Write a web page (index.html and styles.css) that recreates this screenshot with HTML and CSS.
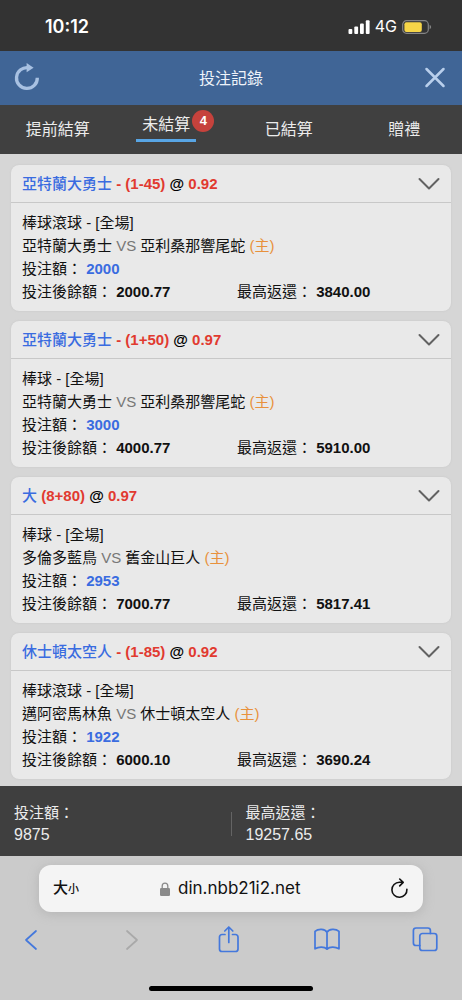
FILE: index.html
```html
<!DOCTYPE html>
<html lang="zh-Hant">
<head>
<meta charset="utf-8">
<meta name="viewport" content="width=device-width, initial-scale=1">
<title>投注記錄</title>
<link rel="stylesheet" href="styles.css">
</head>
<body>
<div class="status-bar">
  <time class="clock">10:12</time>
  <div class="status-icons">
    <svg class="signal" viewBox="0 0 22 14" width="22" height="14" aria-hidden="true"><rect x="0.5" y="9" width="3.8" height="5" rx="1"/><rect x="6.3" y="6.5" width="3.8" height="7.5" rx="1"/><rect x="12" y="3.5" width="3.8" height="10.5" rx="1"/><rect x="17.8" y="0.3" width="3.8" height="13.7" rx="1"/></svg>
    <span class="network">4G</span>
    <svg class="battery" viewBox="0 0 30 14" width="30" height="14" aria-hidden="true"><rect x="0.7" y="0.7" width="25.6" height="12.6" rx="3.8" fill="none" stroke="#858585" stroke-width="1.2"/><rect x="2.4" y="2.3" width="17.4" height="9.6" rx="2" fill="#f6d548"/><path d="M27.6 5c2 .6 2 3.600 0 4.200z" fill="#858585"/></svg>
  </div>
</div>
<header class="title-bar">
  <button class="icon-button" type="button" aria-label="重新整理"><svg viewBox="0 0 28 28" width="28" height="28"><path d="M24.300 13.700A10.400 10.400 0 1 1 15.600 3.800" fill="none" stroke="#a8c1e2" stroke-width="3.300"/><path d="M13.600 -1L20.600 3.700L13.600 8.300z" fill="#a8c1e2"/></svg></button>
  <h1 class="title">投注記錄</h1>
  <button class="icon-button" type="button" aria-label="關閉"><svg viewBox="0 0 28 28" width="28" height="28"><path d="M5.500 5L22.500 22M22.500 5L5.500 22" fill="none" stroke="#b9cfec" stroke-width="2.500" stroke-linecap="round"/></svg></button>
</header>
<nav class="tabs">
  <button class="tab" type="button">提前結算</button>
  <button class="tab tab-current" type="button" aria-current="page"><span class="tab-active">未結算</span><span class="badge">4</span></button>
  <button class="tab" type="button">已結算</button>
  <button class="tab" type="button">贈禮</button>
</nav>
<main class="bets">
  <article class="card">
    <header class="card-head">
      <h2 class="pick"><span class="team">亞特蘭大勇士</span> <span class="odds">- (1-45)</span> @ <span class="odds">0.92</span></h2>
      <button class="chevron" type="button" aria-label="展開"><svg viewBox="0 0 22 12" width="22" height="12"><path d="M1.500 1L11 10.500L20.500 1"/></svg></button>
    </header>
    <div class="card-body">
      <p>棒球滾球 - [全場]</p>
      <p>亞特蘭大勇士 <span class="vs">VS</span> 亞利桑那響尾蛇 <span class="home">(主)</span></p>
      <p>投注額： <b class="stake">2000</b></p>
      <div class="totals"><p>投注後餘額： <b>2000.77</b></p><p>最高返還： <b>3840.00</b></p></div>
    </div>
  </article>
  <article class="card">
    <header class="card-head">
      <h2 class="pick"><span class="team">亞特蘭大勇士</span> <span class="odds">- (1+50)</span> @ <span class="odds">0.97</span></h2>
      <button class="chevron" type="button" aria-label="展開"><svg viewBox="0 0 22 12" width="22" height="12"><path d="M1.500 1L11 10.500L20.500 1"/></svg></button>
    </header>
    <div class="card-body">
      <p>棒球 - [全場]</p>
      <p>亞特蘭大勇士 <span class="vs">VS</span> 亞利桑那響尾蛇 <span class="home">(主)</span></p>
      <p>投注額： <b class="stake">3000</b></p>
      <div class="totals"><p>投注後餘額： <b>4000.77</b></p><p>最高返還： <b>5910.00</b></p></div>
    </div>
  </article>
  <article class="card">
    <header class="card-head">
      <h2 class="pick"><span class="team">大</span> <span class="odds">(8+80)</span> @ <span class="odds">0.97</span></h2>
      <button class="chevron" type="button" aria-label="展開"><svg viewBox="0 0 22 12" width="22" height="12"><path d="M1.500 1L11 10.500L20.500 1"/></svg></button>
    </header>
    <div class="card-body">
      <p>棒球 - [全場]</p>
      <p>多倫多藍鳥 <span class="vs">VS</span> 舊金山巨人 <span class="home">(主)</span></p>
      <p>投注額： <b class="stake">2953</b></p>
      <div class="totals"><p>投注後餘額： <b>7000.77</b></p><p>最高返還： <b>5817.41</b></p></div>
    </div>
  </article>
  <article class="card">
    <header class="card-head">
      <h2 class="pick"><span class="team">休士頓太空人</span> <span class="odds">- (1-85)</span> @ <span class="odds">0.92</span></h2>
      <button class="chevron" type="button" aria-label="展開"><svg viewBox="0 0 22 12" width="22" height="12"><path d="M1.500 1L11 10.500L20.500 1"/></svg></button>
    </header>
    <div class="card-body">
      <p>棒球滾球 - [全場]</p>
      <p>邁阿密馬林魚 <span class="vs">VS</span> 休士頓太空人 <span class="home">(主)</span></p>
      <p>投注額： <b class="stake">1922</b></p>
      <div class="totals"><p>投注後餘額： <b>6000.10</b></p><p>最高返還： <b>3690.24</b></p></div>
    </div>
  </article>
</main>
<section class="summary">
  <div class="sum"><p>投注額：</p><p class="amount">9875</p></div>
  <div class="divider"></div>
  <div class="sum"><p>最高返還：</p><p class="amount">19257.65</p></div>
</section>
<footer class="browser">
  <div class="address-bar">
    <button class="text-size" type="button">大<small>小</small></button>
    <label class="address">
      <svg viewBox="0 0 10 14" width="10" height="14" aria-hidden="true"><path d="M2.200 7V4a2.800 2.900 0 0 1 5.600 0v3" fill="none" stroke="#8a8a8a" stroke-width="1.300"/><rect x="0" y="6" width="10" height="8" rx="1.300" fill="#8a8a8a"/></svg>
      <input class="url" type="text" value="din.nbb21i2.net" aria-label="網址">
    </label>
    <button class="reload" type="button" aria-label="重新載入"><svg viewBox="0 0 20 22" width="20" height="22"><path d="M17.900 11.300A7.500 7.500 0 1 1 10.400 4.300H13.800M10.700 1L14.200 4.400L10.700 7.900" fill="none" stroke="#111" stroke-width="1.600" stroke-linecap="round" stroke-linejoin="round"/></svg></button>
  </div>
  <nav class="toolbar">
    <button class="tool" type="button" aria-label="上一頁"><svg viewBox="0 0 26 28"><path d="M18 5L8 14L18 23"/></svg></button>
    <button class="tool tool-off" type="button" aria-label="下一頁" disabled><svg viewBox="0 0 26 28"><path d="M10 5L20 14L10 23"/></svg></button>
    <button class="tool" type="button" aria-label="分享"><svg viewBox="0 0 26 28"><path d="M10 8.500H7a2.500 2.500 0 0 0-2.500 2.500V23A2.500 2.500 0 0 0 7 25.500H20.500a2.500 2.500 0 0 0 2.500-2.500V11A2.500 2.500 0 0 0 20.500 8.500H17.500M13.800 16.500V1.200M9.800 5L13.800 1L17.800 5"/></svg></button>
    <button class="tool" type="button" aria-label="書籤"><svg viewBox="0 0 26 28"><path d="M13 6.300C11 2.600 4.200 2.600 1 5.300V22.800C4.500 20.600 10.500 20.400 13 23.200C15.500 20.400 21.500 20.600 25 22.800V5.300C21.800 2.600 15 2.600 13 6.300V23.200"/></svg></button>
    <button class="tool" type="button" aria-label="分頁"><svg viewBox="0 0 26 28"><rect x="7.800" y="7.500" width="17" height="17" rx="2.600"/><path d="M7.800 19.500H4A2.600 2.600 0 0 1 1.400 16.900V4.600A2.600 2.600 0 0 1 4 2H15.800A2.600 2.600 0 0 1 18.400 4.600V7.500"/></svg></button>
  </nav>
  <div class="home-indicator"></div>
</footer>
</body>
</html>
```
FILE: styles.css
```css
* { box-sizing: border-box; }
body {
  margin: 0;
  min-height: 100vh;
  display: flex;
  flex-direction: column;
  background: #d6d6d6;
  color: #111;
  font: 15px/23px "Liberation Sans", "Noto Sans CJK TC", sans-serif;
}
p, h1, h2 { margin: 0; }
button, input {
  border: 0;
  padding: 0;
  background: none;
  color: inherit;
  font: inherit;
}
svg { display: block; overflow: visible; }

.status-bar {
  display: flex;
  justify-content: space-between;
  align-items: center;
  height: 51px;
  padding: 2px 30px 0 45px;
  background: #333;
  color: #fff;
  font-family: Inter, sans-serif;
}
.clock { font-size: 18px; font-weight: 600; }
.status-icons { display: flex; align-items: center; gap: 5px; }
.signal { fill: #fff; }
.network { font-size: 16px; }

.title-bar {
  display: flex;
  justify-content: space-between;
  align-items: center;
  height: 54px;
  padding: 0 13px;
  background: #406596;
  color: #eef3fa;
}
.title { font-size: 16px; font-weight: 400; }

.tabs {
  display: grid;
  grid-template-columns: repeat(4, 1fr);
  height: 49px;
  background: #404040;
  color: #ececec;
  font-size: 16px;
}
.tab { display: flex; justify-content: center; align-items: center; }
.tab-current { padding-bottom: 4px; }
.tab-active {
  padding: 0 6px 3px;
  border-bottom: 3px solid #58a5e4;
}
.badge {
  width: 22px;
  height: 22px;
  margin: 0 -4px 14px;
  border-radius: 50%;
  background: #c6423c;
  color: #fff;
  font-size: 13px;
  font-weight: 700;
  line-height: 22px;
}

.bets {
  flex: 1;
  display: flex;
  flex-direction: column;
  gap: 10px;
  padding: 11px 11px 7px;
}
.card {
  border-radius: 8px;
  background: #e9e9e9;
  box-shadow: 0 0 2px #c4c4c4;
}
.card-head {
  display: flex;
  justify-content: space-between;
  align-items: center;
  height: 38px;
  padding: 0 11px;
  border-bottom: 1px solid #c8c8c8;
}
.pick { font-size: 15px; font-weight: 700; color: #000; }
.team { font-weight: 500; color: #3a6ce0; }
.odds { color: #e13a30; }
.chevron path {
  fill: none;
  stroke: #626262;
  stroke-width: 2;
  stroke-linecap: round;
  stroke-linejoin: round;
}
.card-body { padding: 8px 11px; }
.vs { color: #777; }
.home { color: #e8913c; }
.stake { color: #3a6ce0; }
.totals { display: grid; grid-template-columns: 1fr 1fr; gap: 12px; }

.summary {
  display: flex;
  align-items: center;
  padding: 16px 0 10px;
  background: #3f3f3f;
  color: #ececec;
  line-height: 22px;
}
.sum { flex: 1; padding: 0 14px; }
.amount { font-size: 16px; }
.divider { width: 1px; height: 24px; background: #646464; }

.browser {
  display: flex;
  flex-direction: column;
  padding: 9px 0;
  background: #cbcbcb;
  color: #111;
}
.address-bar {
  display: grid;
  grid-template-columns: 1fr auto 1fr;
  align-items: center;
  height: 47px;
  margin: 0 39px;
  padding: 0 14px;
  border-radius: 12px;
  background: #f4f4f4;
  box-shadow: 0 2px 12px #b4b4b4;
}
.text-size { justify-self: start; font-size: 15px; font-weight: 500; }
.text-size small { font-size: 11px; }
.address { display: flex; align-items: center; gap: 8px; }
.url { width: 124px; font-family: Inter, sans-serif; font-size: 17px; }
.reload { justify-self: end; }
.toolbar {
  display: flex;
  justify-content: space-between;
  padding: 14px 24px 0 18px;
}
.tool svg {
  width: 26px;
  height: 28px;
  fill: none;
  stroke: #4478dc;
  stroke-width: 1.700;
  stroke-linecap: round;
  stroke-linejoin: round;
}
.tool-off svg { stroke: #a9a9a9; }
.home-indicator {
  align-self: center;
  width: 164px;
  height: 5px;
  margin-top: 32px;
  border-radius: 3px;
  background: #000;
}
```
